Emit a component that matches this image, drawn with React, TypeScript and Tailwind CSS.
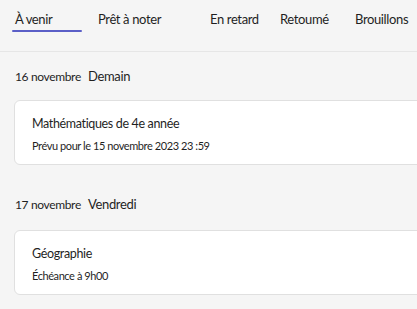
import React from 'react';

const tabs = [
  { label: 'À venir', w: 'w-[83px]', active: true },
  { label: 'Prêt à noter', w: 'w-[112px]' },
  { label: 'En retard', w: 'w-[70px]' },
  { label: 'Retoumé', w: 'w-[75px]' },
  { label: 'Brouillons', w: 'w-[70px]' },
];

const groups = [
  { date: '16 novembre', day: 'Demain', title: 'Mathématiques de 4e année', sub: 'Prévu pour le 15 novembre 2023 23 :59', pt: 'pt-[16px]', mt: 'mt-[14px]' },
  { date: '17 novembre', day: 'Vendredi', title: 'Géographie', sub: 'Échéance à 9h00', pt: 'pt-[31px]', mt: 'mt-[16px]' },
];

const App: React.FC = () => {
  return (
    <div className="w-[417px] h-[309px] overflow-hidden bg-[#f5f5f5] text-[#1f1f1f] font-['Lato',sans-serif]">
      <div className="flex pl-3 h-[52px] border-b border-[#e6e6e6]">
        {tabs.map((tab) => (
          <div key={tab.label} className={`${tab.w} shrink-0 flex flex-col`}>
            <div className="pt-[11px] h-[30px] pl-[3px] text-[13px] tracking-[-0.37px] leading-[16px]">{tab.label}</div>
            {tab.active && <div className="h-[2px] w-[70px] bg-[#5b5fc7] rounded-full" />}
          </div>
        ))}
      </div>

      {groups.map((g) => (
        <div key={g.date} className={g.pt}>
          <div className="flex items-center pl-[15px] h-[18px]">
            <span className="text-[12px] tracking-[-0.35px] w-[73px]">{g.date}</span>
            <span className="text-[13px] tracking-[-0.35px]">{g.day}</span>
          </div>
          <div className={`${g.mt} ml-[14px] w-[420px] h-[65px] bg-white border border-[#e0e0e0] rounded-[6px] pl-[17px] pt-[15px]`}>
            <div className="text-[12.5px] tracking-[-0.35px] leading-[16px]">{g.title}</div>
            <div className="mt-[7px] text-[11px] tracking-[-0.42px] leading-[14px]">{g.sub}</div>
          </div>
        </div>
      ))}
    </div>
  );
};

export default App;
